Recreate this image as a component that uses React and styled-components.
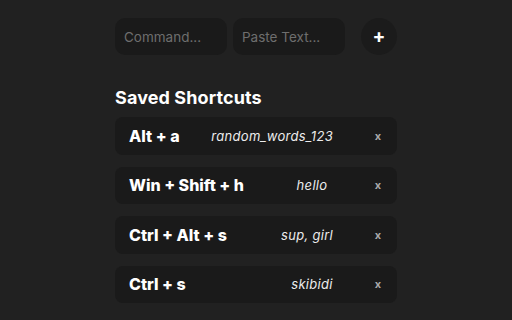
import React from "react";
import styled, { createGlobalStyle } from "styled-components";

const GlobalStyle = createGlobalStyle`
  body {
    margin: 0;
    background-color: #212121;
    font-family: Inter, "Open Sans", sans-serif;
    color: #fff;
  }
`;

const Page = styled.main`
  width: 282px;
  margin: 0 auto;
  padding-top: 18px;
`;

const InputRow = styled.div`
  display: flex;
  align-items: center;
  gap: 6px;
`;

const Field = styled.input`
  box-sizing: border-box;
  width: 112px;
  height: 37px;
  padding: 0 9px;
  border: none;
  border-radius: 10px;
  background-color: #1a1a1a;
  color: #ddd;
  font-family: inherit;
  font-size: 13.5px;
  outline: none;

  &::placeholder {
    color: #6e6e6e;
  }
`;

const AddButton = styled.button`
  width: 37px;
  height: 37px;
  margin-left: 10px;
  border: none;
  border-radius: 50%;
  background-color: #1b1b1b;
  color: #fff;
  font-family: inherit;
  font-size: 19px;
  font-weight: 700;
  line-height: 1;
  padding: 0;
  cursor: pointer;
`;

const Heading = styled.h2`
  margin: 32px 0 8px;
  font-size: 18px;
  font-weight: 700;
  line-height: 22px;
  letter-spacing: 0.1px;
`;

const List = styled.div`
  display: flex;
  flex-direction: column;
  gap: 12px;
`;

const Card = styled.div`
  display: flex;
  align-items: center;
  height: 37.5px;
  padding: 0 14px;
  border-radius: 8px;
  background-color: #1a1a1a;
`;

const Keys = styled.span`
  flex: 1;
  font-size: 16px;
  font-weight: 800;
  white-space: nowrap;
`;

const Value = styled.span`
  min-width: 42px;
  margin-right: 40px;
  text-align: center;
  font-size: 13px;
  font-style: italic;
  color: #ececec;
  white-space: nowrap;
  letter-spacing: 0.3px;
`;

const RemoveButton = styled.button`
  width: 10px;
  padding: 0;
  border: none;
  background: none;
  color: #a8a8a8;
  font-family: inherit;
  font-size: 11px;
  font-weight: 700;
  cursor: pointer;
`;

const shortcuts = [
  { keys: "Alt + a", text: "random_words_123" },
  { keys: "Win + Shift + h", text: "hello" },
  { keys: "Ctrl + Alt + s", text: "sup, girl" },
  { keys: "Ctrl + s", text: "skibidi" },
];

const App = () => {
  return (
    <>
      <GlobalStyle />
      <Page>
        <InputRow>
          <Field placeholder="Command..." />
          <Field placeholder="Paste Text..." />
          <AddButton aria-label="Add">+</AddButton>
        </InputRow>

        <Heading>Saved Shortcuts</Heading>
        <List>
          {shortcuts.map((s) => (
            <Card key={s.keys}>
              <Keys>{s.keys}</Keys>
              <Value>{s.text}</Value>
              <RemoveButton aria-label="Remove">x</RemoveButton>
            </Card>
          ))}
        </List>
      </Page>
    </>
  );
};

export default App;
